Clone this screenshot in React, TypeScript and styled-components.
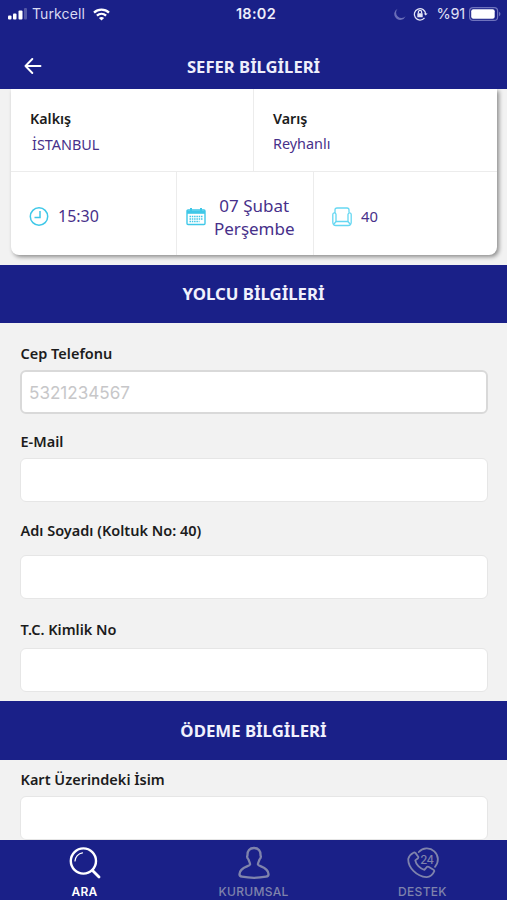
import React from "react";
import styled, { createGlobalStyle } from "styled-components";

const NAVY = "#1a2088";
const PURPLE = "#47308a";
const CYAN = "#3fc8e8";

const GlobalStyle = createGlobalStyle`
  *, *::before, *::after { box-sizing: border-box; }
  body { margin: 0; background: #f2f2f2; font-family: "Noto Sans", sans-serif; color: #1c1c1c; }
`;

const Screen = styled.div`
  width: 507px;
  height: 900px;
  display: flex;
  flex-direction: column;
  overflow: hidden;
  background: #f2f2f2;
`;

const Header = styled.header`
  flex: none;
  height: 89px;
  background: ${NAVY};
  color: #fff;
`;

const StatusBar = styled.div`
  height: 28px;
  display: grid;
  grid-template-columns: 1fr auto 1fr;
  align-items: center;
  padding: 0 6px 0 8px;
  font-family: Inter, sans-serif;
  font-size: 14px;
  line-height: 28px;
`;

const StatusGroup = styled.div<{ $end?: boolean }>`
  display: flex;
  align-items: center;
  justify-content: ${(p) => (p.$end ? "flex-end" : "flex-start")};
`;

const Carrier = styled.span`
  margin: 0 8px 0 5px;
  font-size: 14px;
  letter-spacing: 0.1px;
  color: #d9daf2;
`;

const Clock = styled.span`
  font-size: 14.5px;
  font-weight: 600;
  letter-spacing: 0.3px;
  color: #eeeefb;
  margin-left: 3px;
`;

const Percent = styled.span`
  margin: 0 4px 0 8px;
  font-size: 14.5px;
  letter-spacing: -0.2px;
  color: #e0e1f5;
`;

const NavBar = styled.div`
  height: 61px;
  display: grid;
  grid-template-columns: 66px 1fr 66px;
  align-items: center;
`;

const BackButton = styled.button`
  display: flex;
  align-items: center;
  justify-content: center;
  height: 40px;
  margin-top: 15px;
  padding: 0;
  border: 0;
  background: none;
`;

const NavTitle = styled.h1`
  margin: 16px 0 0;
  text-align: center;
  font-size: 16.6px;
  font-weight: 700;
  line-height: 24px;
  letter-spacing: 0.02px;
  color: #eeeefb;
`;

const Content = styled.main`
  flex: 1;
  min-height: 0;
  overflow: hidden;
`;

const TripCard = styled.section`
  height: 166px;
  margin: 0 10px 10px 11px;
  background: #fff;
  border-radius: 0 0 8px 8px;
  box-shadow: 2px 2px 4px rgba(0, 0, 0, 0.42);
`;

const Places = styled.div`
  display: grid;
  grid-template-columns: 242px 1fr;
  height: 83px;
  border-bottom: 1px solid #ececec;
`;

const Place = styled.div<{ $divided?: boolean }>`
  padding: 19px 19px 0;
  border-left: ${(p) => (p.$divided ? "1px solid #ececec" : "0")};
`;

const PlaceLabel = styled.div`
  font-size: 14.3px;
  font-weight: 600;
  line-height: 22px;
`;

const PlaceName = styled.div<{ $inset?: boolean }>`
  margin: ${(p) => (p.$inset ? "4px 0 0 2px" : "3px 0 0")};
  font-size: 14.4px;
  line-height: 22px;
  color: ${PURPLE};
`;

const Details = styled.div`
  display: grid;
  grid-template-columns: 165px 137px 1fr;
  height: 83px;
`;

const Detail = styled.div<{ $divided?: boolean; $gap: number; $inset: number }>`
  display: flex;
  align-items: center;
  gap: ${(p) => p.$gap}px;
  padding: 6px 0 0 ${(p) => p.$inset}px;
  border-left: ${(p) => (p.$divided ? "1px solid #ececec" : "0")};
  color: ${PURPLE};
`;

const DetailText = styled.span<{ $size: number }>`
  font-size: ${(p) => p.$size}px;
  line-height: 23px;
  text-align: center;
`;

const Band = styled.h2<{ $tall?: boolean }>`
  height: ${(p) => (p.$tall ? 59 : 58)}px;
  margin: 0;
  padding-bottom: ${(p) => (p.$tall ? 0 : 1)}px;
  display: flex;
  align-items: center;
  justify-content: center;
  background: ${NAVY};
  color: #f1f1fd;
  font-size: 16.8px;
  font-weight: 700;
  letter-spacing: 0;
`;

const Form = styled.div<{ $top: number }>`
  padding: ${(p) => p.$top}px 19px 9px 20px;
`;

const Field = styled.label<{ $before?: number; $gap: number }>`
  display: flex;
  flex-direction: column;
  gap: ${(p) => p.$gap}px;
  margin-top: ${(p) => p.$before ?? 0}px;
`;

const FieldLabel = styled.span`
  height: 20px;
  font-size: 14.5px;
  font-weight: 580;
  line-height: 18px;
  padding-left: 0.5px;
`;

const Input = styled.input<{ $active?: boolean }>`
  width: 100%;
  height: 44px;
  padding: 0 ${(p) => (p.$active ? 7 : 8)}px;
  border: ${(p) => (p.$active ? "2px solid #d9d9d9" : "1px solid #e6e6e6")};
  border-radius: 6px;
  background: #fff;
  outline: 0;
  font: 17.1px Inter, sans-serif;
  &::placeholder { color: #c7c7c9; opacity: 1; }
`;

const TabBar = styled.nav`
  flex: none;
  height: 60px;
  display: grid;
  grid-template-columns: repeat(3, 1fr);
  background: ${NAVY};
`;

const Tab = styled.a<{ $active?: boolean }>`
  display: flex;
  flex-direction: column;
  align-items: center;
  padding-top: 6px;
  gap: 4px;
  color: ${(p) => (p.$active ? "#fff" : "#7f83ac")};
  font-family: Inter, sans-serif;
  font-size: 12px;
  font-weight: ${(p) => (p.$active ? 600 : 500)};
  line-height: 16px;
  letter-spacing: 0.3px;
`;

const SignalIcon = () => (
  <svg width="19" height="12" viewBox="0 0 19 12" fill="#fff">
    <rect x="0" y="7.5" width="3.5" height="4" rx="1" />
    <rect x="5" y="5.5" width="3.5" height="6" rx="1" />
    <rect x="10.5" y="2.5" width="4" height="9" rx="1" />
    <rect x="16" y="0" width="3" height="11.5" rx="1" opacity="0.25" />
  </svg>
);

const WifiIcon = () => (
  <svg width="17" height="13" viewBox="0 0 17 13" fill="none" stroke="#fff" strokeWidth="2.3">
    <path d="M1 4.6C5.2.7 11.8.7 16 4.6" />
    <path d="M3.9 7.7c2.7-2.4 6.5-2.4 9.2 0" />
    <path d="M5.9 10 8.5 12.6 11.1 10C9.7 8.7 7.3 8.7 5.9 10Z" fill="#fff" stroke="none" />
  </svg>
);

const MoonIcon = () => (
  <svg width="12" height="12" viewBox="0 0 12 12" fill="#6a6eb8">
    <path d="M3.6.7A5.9 5.9 0 1 0 11.6 8.3 5.4 5.4 0 0 1 3.6.7Z" />
  </svg>
);

const RotationLockIcon = () => (
  <svg width="15" height="14" viewBox="0 0 15 14" fill="none" stroke="#e3e4f6" strokeWidth="1.3">
    <path d="M11.5 10.9A5.7 5.7 0 1 1 12.7 7" />
    <path d="m10.7 6.5 2 2 2-2Z" fill="#e3e4f6" stroke="none" />
    <rect x="4.3" y="6.2" width="5.4" height="4" rx=".5" fill="#e3e4f6" stroke="none" />
    <path d="M5.4 6.5V5a1.6 1.6 0 0 1 3.2 0v1.5" />
  </svg>
);

const BatteryIcon = () => (
  <svg width="32" height="14" viewBox="0 0 32 14">
    <rect x=".6" y=".6" width="28" height="12.8" rx="3.5" fill="none" stroke="#6f73bd" strokeWidth="1.2" />
    <rect x="2.2" y="2.2" width="23.5" height="9.6" rx="2" fill="#fff" />
    <path d="M30.2 4.8c1.6.8 1.6 3.6 0 4.4Z" fill="#7f83c5" />
  </svg>
);

const ArrowIcon = () => (
  <svg width="18" height="16" viewBox="0 0 18 16" fill="none" stroke="#fff" strokeWidth="1.9" strokeLinecap="round" strokeLinejoin="round">
    <path d="M16.5 8H1.5M8.3 1 1.5 8l6.8 7" />
  </svg>
);

const ClockIcon = () => (
  <svg width="20" height="20" viewBox="0 0 20 20" fill="none" stroke={CYAN}>
    <circle cx="10" cy="9.5" r="8.7" strokeWidth="1.5" />
    <path d="M11 4V10.5H5.5" strokeWidth="1.5" />
  </svg>
);

const CalendarIcon = () => (
  <svg width="20" height="18" viewBox="0 0 20 18" fill="none" stroke={CYAN}>
    <rect x="1" y="2" width="18" height="14.5" rx="1" strokeWidth="1.4" />
    <path d="M1 4.2h18" strokeWidth="3.2" />
    <path d="M5 0V3.5M15 0V3.5" strokeWidth="2" />
    <path d="M3.5 8.500h13M3.500 11h13M3.500 13.500h10" strokeWidth="1.3" strokeDasharray="1.5 .8" />
  </svg>
);

const SeatIcon = () => (
  <svg width="20" height="20" viewBox="0 0 20 20" fill="none" stroke="#65d7f2" strokeWidth="1.3" strokeLinejoin="round">
    <path d="M3 5.500V3Q3 1 5 1H15Q17 1 17 3V5.500" />
    <path d="M4 14.500V7.300Q3.600 5.500 2.200 5.800T.800 7.500V15.500Q1 18.500 3.800 18.500H16.200Q19 18.500 19.200 15.500V7.500Q19.200 6 17.800 5.800T16 7.300V14.500Z" />
    <path d="M4 14.500 2 17M16 14.500 18 17" />
  </svg>
);

const SearchIcon = () => (
  <svg width="32" height="34" viewBox="0 0 32 34" fill="none" stroke="#fff" strokeLinecap="round">
    <circle cx="14.4" cy="15" r="12.6" strokeWidth="2.4" />
    <path d="m23.5 24.5 6.5 6.5" strokeWidth="2.8" />
    <path d="M6 15a8.5 8.5 0 0 1 7.5-8.1" strokeWidth="1.2" />
  </svg>
);

const PersonIcon = () => (
  <svg width="32" height="34" viewBox="0 0 32 34" fill="none" stroke="currentColor" strokeWidth="2.3" strokeLinejoin="round">
    <path d="M16 2C11.500 2 9.300 5 9.500 9.200 8.900 10.600 9.500 12.600 10.500 13.500 11 15.500 12 16.500 12.100 18.400 11.800 20.800 2 20.500 1.500 28 1.300 30 2.500 30.500 4 30.700 11 32 21 32 28 30.700 29.500 30.500 30.700 30 30.500 28 30 20.500 20.200 20.800 19.900 18.400 20 16.500 21 15.500 21.500 13.500 22.500 12.600 23.100 10.600 22.500 9.200 22.700 5 20.500 2 16 2Z" />
  </svg>
);

const Support24Icon = () => (
  <svg width="32" height="34" viewBox="0 0 32 34" fill="none" stroke="currentColor" strokeWidth="1.8" strokeLinecap="round" strokeLinejoin="round">
    <path d="M11.800 6A10.800 10.800 0 1 1 28 20.800" />
    <path d="M6.400 6.800C4.200 8 2 10.300 1.300 12.800.7 21.300 9.500 30.300 19.500 31.100 23.500 31.200 26 28.200 27.300 25.200Q27.400 24.300 26.500 23.700L21.500 20.800Q20.500 20.300 19.800 21L17.400 23.800C13 22.800 8.900 18.300 8.300 14.400L11 12.200Q11.600 11.500 11.200 10.700L8.400 6.900Q7.500 6.100 6.400 6.800Z" />
    <text x="13.200" y="17.700" fill="currentColor" stroke="none" fontFamily="Inter, sans-serif" fontSize="11.5" fontWeight="500" letterSpacing="-0.5">24</text>
  </svg>
);

const IndicatorGap = styled.span`
  width: 7px;
`;

export default function App() {
  return (
    <Screen>
      <GlobalStyle />
      <Header>
        <StatusBar>
          <StatusGroup>
            <SignalIcon />
            <Carrier>Turkcell</Carrier>
            <WifiIcon />
          </StatusGroup>
          <Clock>18:02</Clock>
          <StatusGroup $end>
            <MoonIcon />
            <IndicatorGap />
            <RotationLockIcon />
            <Percent>%91</Percent>
            <BatteryIcon />
          </StatusGroup>
        </StatusBar>
        <NavBar>
          <BackButton aria-label="Geri"><ArrowIcon /></BackButton>
          <NavTitle>SEFER BİLGİLERİ</NavTitle>
        </NavBar>
      </Header>

      <Content>
        <TripCard>
          <Places>
            <Place>
              <PlaceLabel>Kalkış</PlaceLabel>
              <PlaceName $inset>İSTANBUL</PlaceName>
            </Place>
            <Place $divided>
              <PlaceLabel>Varış</PlaceLabel>
              <PlaceName>Reyhanlı</PlaceName>
            </Place>
          </Places>
          <Details>
            <Detail $gap={9} $inset={18}>
              <ClockIcon />
              <DetailText $size={16}>15:30</DetailText>
            </Detail>
            <Detail $divided $gap={8} $inset={9}>
              <CalendarIcon />
              <DetailText $size={17}>07 Şubat<br />Perşembe</DetailText>
            </Detail>
            <Detail $divided $gap={9} $inset={18}>
              <SeatIcon />
              <DetailText $size={14.8}>40</DetailText>
            </Detail>
          </Details>
        </TripCard>

        <Band>YOLCU BİLGİLERİ</Band>
        <Form $top={21}>
          <Field $gap={6}>
            <FieldLabel>Cep Telefonu</FieldLabel>
            <Input $active type="tel" placeholder="5321234567" />
          </Field>
          <Field $before={18} $gap={6}>
            <FieldLabel>E-Mail</FieldLabel>
            <Input type="email" />
          </Field>
          <Field $before={19} $gap={14}>
            <FieldLabel>Adı Soyadı (Koltuk No: 40)</FieldLabel>
            <Input />
          </Field>
          <Field $before={21} $gap={8}>
            <FieldLabel>T.C. Kimlik No</FieldLabel>
            <Input />
          </Field>
        </Form>

        <Band $tall>ÖDEME BİLGİLERİ</Band>
        <Form $top={10}>
          <Field $gap={6}>
            <FieldLabel>Kart Üzerindeki İsim</FieldLabel>
            <Input />
          </Field>
        </Form>
      </Content>

      <TabBar>
        <Tab $active><SearchIcon />ARA</Tab>
        <Tab><PersonIcon />KURUMSAL</Tab>
        <Tab><Support24Icon />DESTEK</Tab>
      </TabBar>
    </Screen>
  );
}
